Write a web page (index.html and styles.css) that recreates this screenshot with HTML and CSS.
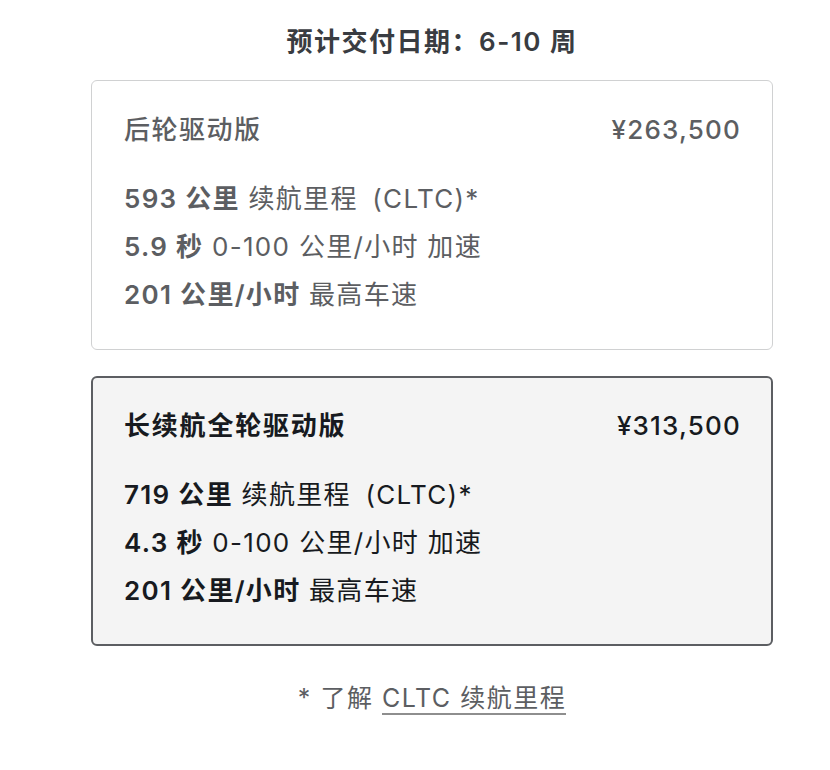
FILE: index.html
```html
<!DOCTYPE html>
<html lang="zh-CN">
<head>
	<meta charset="UTF-8">
	<meta name="viewport" content="width=device-width, initial-scale=1.0">
	<title>选择车型</title>
	<link rel="stylesheet" href="styles.css">
</head>
<body>
	<div class="page">
		<h2 class="delivery">预计交付日期：6-10 周</h2>

		<div class="trim">
			<div class="trim-head">
				<span class="trim-name">后轮驱动版</span>
				<span class="trim-price">¥263,500</span>
			</div>
			<ul class="specs">
				<li><b>593 公里</b> 续航里程&thinsp; (CLTC)*</li>
				<li><b>5.9 秒</b> 0-100 公里/小时 加速</li>
				<li><b>201 公里/小时</b> 最高车速</li>
			</ul>
		</div>

		<div class="trim selected">
			<div class="trim-head">
				<span class="trim-name">长续航全轮驱动版</span>
				<span class="trim-price">¥313,500</span>
			</div>
			<ul class="specs">
				<li><b>719 公里</b> 续航里程&thinsp; (CLTC)*</li>
				<li><b>4.3 秒</b> 0-100 公里/小时 加速</li>
				<li><b>201 公里/小时</b> 最高车速</li>
			</ul>
		</div>

		<p class="note">* 了解 <a href="#">CLTC 续航里程</a></p>
	</div>
</body>
</html>
```

FILE: styles.css
```css
*, *:before, *:after {
	box-sizing: border-box;
}
html {
	font-family: Inter, "Noto Sans CJK SC", sans-serif;
	letter-spacing: 1.5px;
}
body {
	margin: 0;
	padding-top: 24px;
	background: white;
	color: #5c5e62;
}
.page {
	width: 682px;
	margin-left: 91px;
}
.delivery {
	margin: 0 0 20px;
	font-size: 26px;
	line-height: 36px;
	font-weight: 600;
	text-align: center;
	color: #393c41;
}
.trim {
	border: 1px solid #d0d1d2;
	border-radius: 6px;
	padding: 31px 32px 30px;
	margin-bottom: 26px;
	background: white;
}
.trim.selected {
	border: 2px solid #5c5e62;
	background: #f4f4f4;
	color: #171a20;
	padding: 30px 31px 29px;
}
.trim-head {
	display: flex;
	justify-content: space-between;
	align-items: center;
	margin-bottom: 27px;
}
.trim-name {
	font-size: 26px;
	line-height: 36px;
	font-weight: 500;
}
.selected .trim-name {
	font-weight: 600;
	letter-spacing: 1.8px;
}
.trim-price {
	font-size: 26px;
	line-height: 36px;
	font-weight: 500;
	letter-spacing: 1.2px;
	margin-right: -1px;
}
.specs {
	list-style: none;
	margin: 0;
	padding: 0;
	font-size: 26px;
	line-height: 48px;
	letter-spacing: 1.3px;
}
.specs b {
	font-weight: 600;
}
.note {
	margin: 34px 0 0;
	font-size: 25px;
	line-height: 36px;
	text-align: center;
}
.note a {
	color: inherit;
	text-decoration: none;
	border-bottom: 2px solid #8e8e8e;
}
```
